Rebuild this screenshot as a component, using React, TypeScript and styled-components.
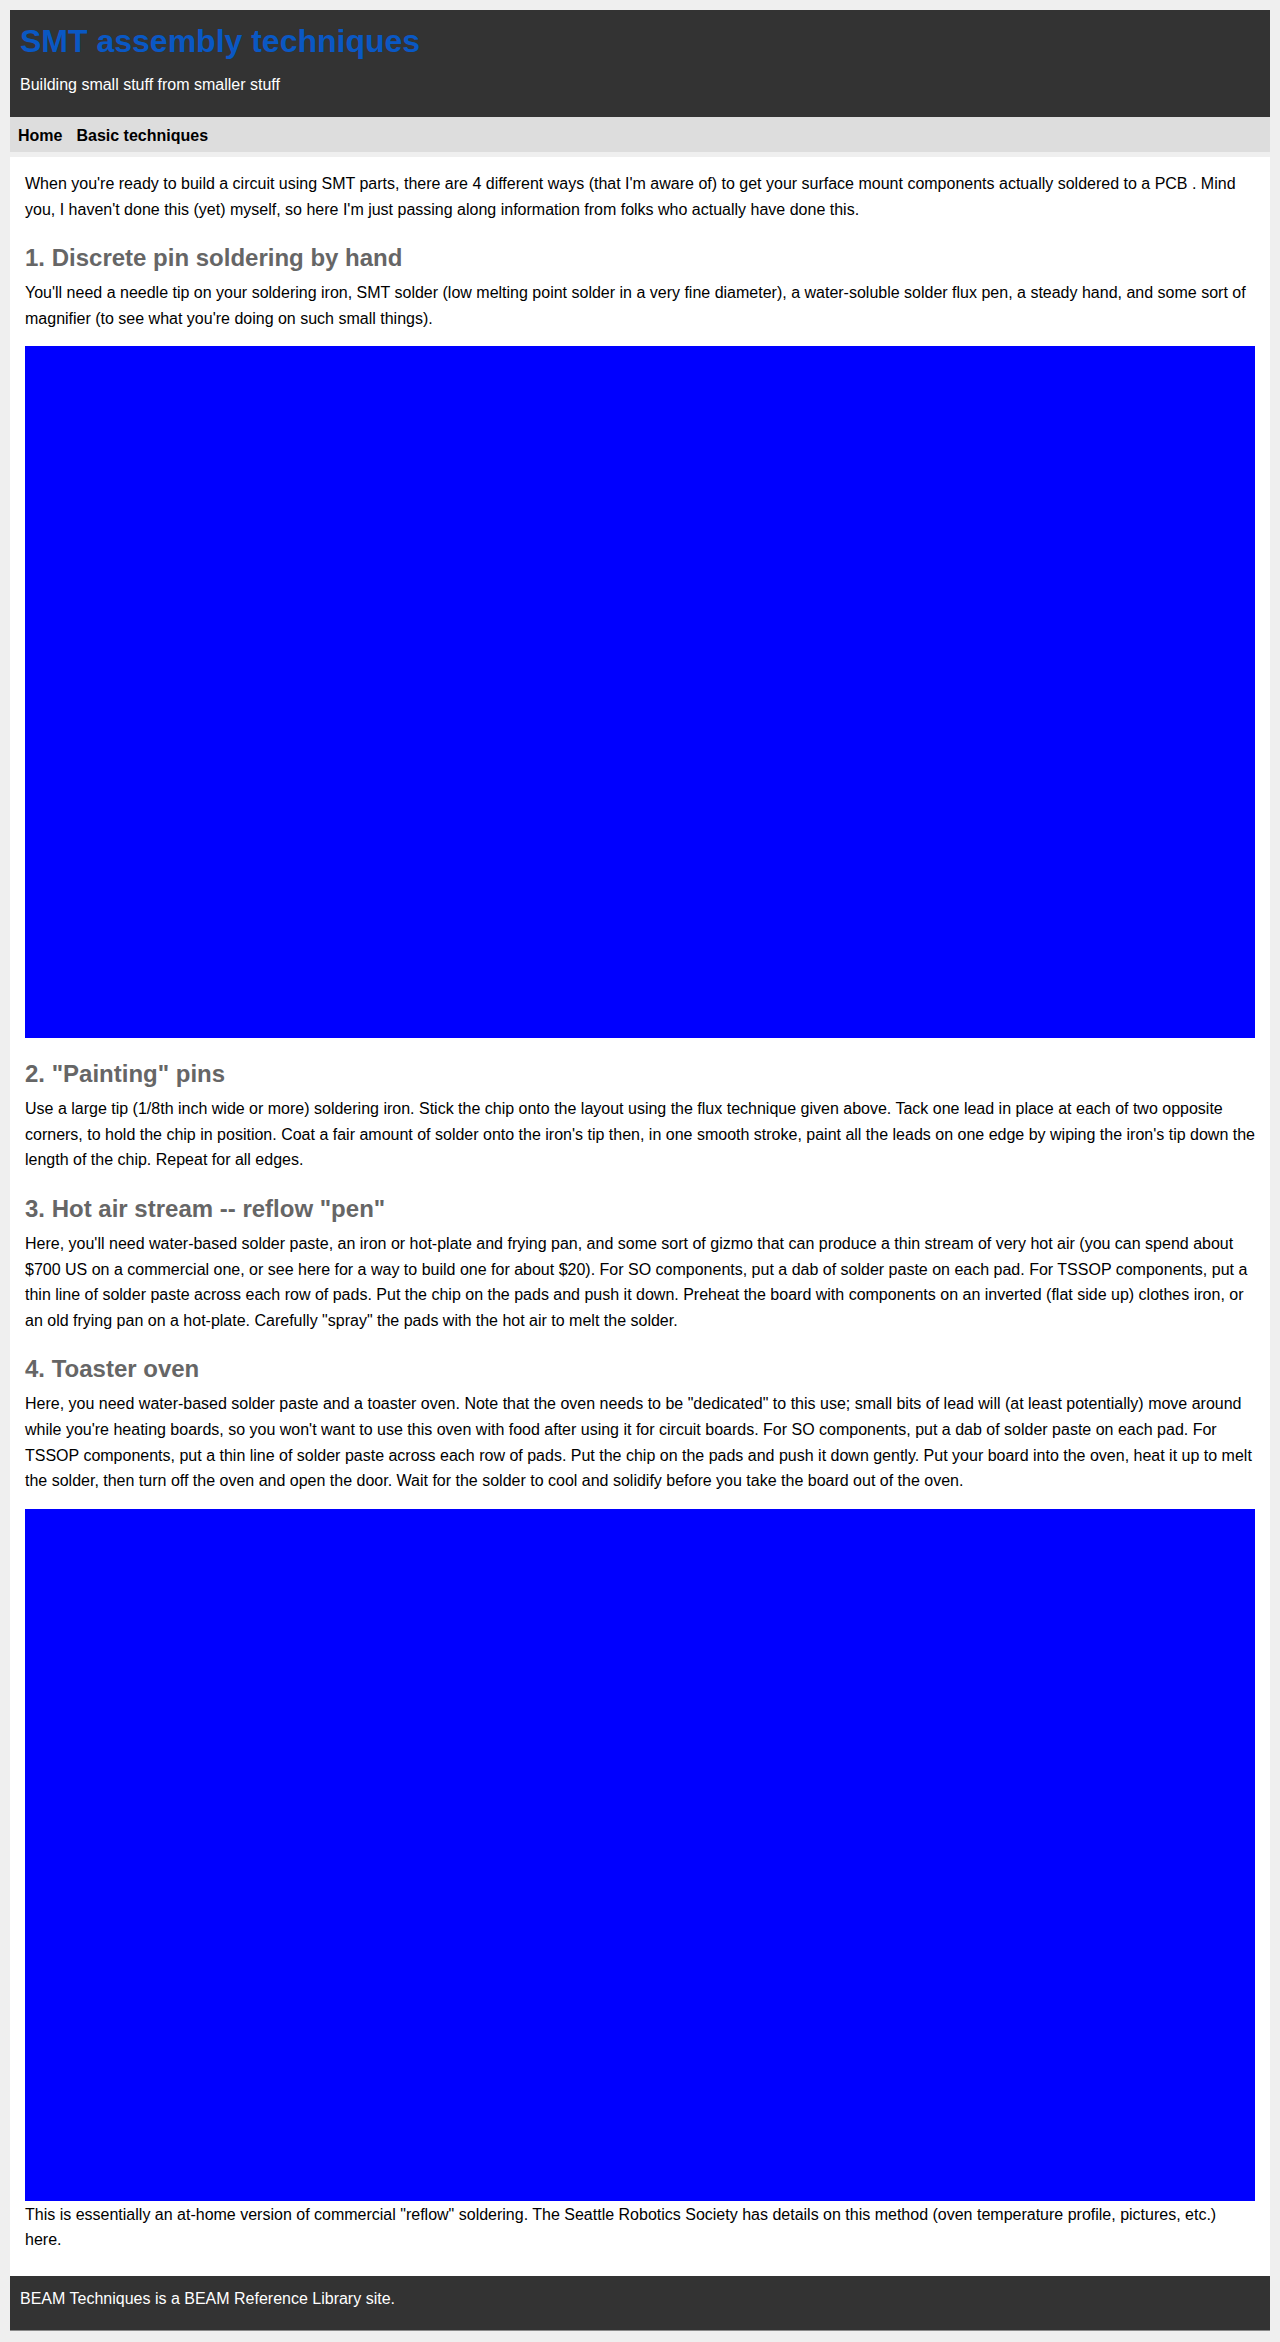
import styled, { createGlobalStyle } from 'styled-components'

const colors = {
  page: '#efefef',
  dark: '#333333',
  nav: '#dddddd',
  title: '#0a58c4',
  heading: '#666666',
  text: '#000000',
  placeholder: '#0000ff'
}

const GlobalStyle = createGlobalStyle`
  html,
  body {
    margin: 0;
    padding: 0;
    background: ${colors.page};
  }

  body {
    font-family: 'Liberation Sans', Arial, Helvetica, sans-serif;
    color: ${colors.text};
  }
`

const StyledPage = styled.div`
  margin: 10px;
  display: flex;
  flex-direction: column;
`

const StyledHeader = styled.header`
  background-color: ${colors.dark};
  padding: 13px 10px 23px;
`

const StyledTitle = styled.h1`
  margin: 0 0 17px;
  font-size: 32px;
  line-height: 36px;
  font-weight: bold;
  color: ${colors.title};
`

const StyledTagline = styled.p`
  margin: 0;
  font-size: 16px;
  line-height: 18px;
  color: #ffffff;
`

const StyledNav = styled.nav`
  display: flex;
  gap: 14px;
  background-color: ${colors.nav};
  padding: 10px 8px 7px;
  margin-bottom: 5px;
`

const StyledNavLink = styled.a`
  font-size: 16px;
  line-height: 18px;
  font-weight: bold;
  color: ${colors.text};
  text-decoration: none;
`

const StyledMain = styled.main`
  background-color: #ffffff;
  padding: 14px 15px 23px;
`

const StyledHeading = styled.h2`
  margin: 21px 0 8px;
  font-size: 24px;
  line-height: 29px;
  font-weight: bold;
  color: ${colors.heading};
`

const StyledParagraph = styled.p<{ $afterFigure?: boolean }>`
  margin: ${({ $afterFigure }) => ($afterFigure ? '1px 0 0' : '0')};
  font-size: 16px;
  line-height: 1.6;
`

const StyledFigure = styled.div`
  width: 100%;
  aspect-ratio: 16 / 9;
  margin-top: 15px;
  background-color: ${colors.placeholder};
`

const StyledFooter = styled.footer`
  background-color: ${colors.dark};
  border-bottom: 1px solid #8a8a8a;
  padding: 14px 10px 22px;
  color: #ffffff;
  font-size: 16px;
  line-height: 18px;
`

export default function App() {
  return (
    <>
      <GlobalStyle />
      <StyledPage>
        <StyledHeader>
          <StyledTitle>SMT assembly techniques</StyledTitle>
          <StyledTagline>Building small stuff from smaller stuff</StyledTagline>
        </StyledHeader>

        <StyledNav>
          <StyledNavLink href="#">Home</StyledNavLink>
          <StyledNavLink href="#">Basic techniques</StyledNavLink>
        </StyledNav>

        <StyledMain>
          <StyledParagraph>
            When you're ready to build a circuit using SMT parts, there are 4
            different ways (that I'm aware of) to get your surface mount
            components actually soldered to a PCB . Mind you, I haven't done
            this (yet) myself, so here I'm just passing along information from
            folks who actually have done this.
          </StyledParagraph>

          <StyledHeading>1. Discrete pin soldering by hand</StyledHeading>
          <StyledParagraph>
            You'll need a needle tip on your soldering iron, SMT solder (low
            melting point solder in a very fine diameter), a water-soluble
            solder flux pen, a steady hand, and some sort of magnifier (to see
            what you're doing on such small things).
          </StyledParagraph>
          <StyledFigure role="img" aria-label="Soldering by hand" />

          <StyledHeading>2. "Painting" pins</StyledHeading>
          <StyledParagraph>
            Use a large tip (1/8th inch wide or more) soldering iron. Stick the
            chip onto the layout using the flux technique given above. Tack one
            lead in place at each of two opposite corners, to hold the chip in
            position. Coat a fair amount of solder onto the iron's tip then, in
            one smooth stroke, paint all the leads on one edge by wiping the
            iron's tip down the length of the chip. Repeat for all edges.
          </StyledParagraph>

          <StyledHeading>3. Hot air stream -- reflow "pen"</StyledHeading>
          <StyledParagraph>
            Here, you'll need water-based solder paste, an iron or hot-plate and
            frying pan, and some sort of gizmo that can produce a thin stream of
            very hot air (you can spend about $700 US on a commercial one, or
            see here for a way to build one for about $20). For SO components,
            put a dab of solder paste on each pad. For TSSOP components, put a
            thin line of solder paste across each row of pads. Put the chip on
            the pads and push it down. Preheat the board with components on an
            inverted (flat side up) clothes iron, or an old frying pan on a
            hot-plate. Carefully "spray" the pads with the hot air to melt the
            solder.
          </StyledParagraph>

          <StyledHeading>4. Toaster oven</StyledHeading>
          <StyledParagraph>
            Here, you need water-based solder paste and a toaster oven. Note
            that the oven needs to be "dedicated" to this use; small bits of
            lead will (at least potentially) move around while you're heating
            boards, so you won't want to use this oven with food after using it
            for circuit boards. For SO components, put a dab of solder paste on
            each pad. For TSSOP components, put a thin line of solder paste
            across each row of pads. Put the chip on the pads and push it down
            gently. Put your board into the oven, heat it up to melt the
            solder, then turn off the oven and open the door. Wait for the
            solder to cool and solidify before you take the board out of the
            oven.
          </StyledParagraph>
          <StyledFigure role="img" aria-label="Toaster oven reflow" />
          <StyledParagraph $afterFigure>
            This is essentially an at-home version of commercial "reflow"
            soldering. The Seattle Robotics Society has details on this method
            (oven temperature profile, pictures, etc.) here.
          </StyledParagraph>
        </StyledMain>

        <StyledFooter>
          BEAM Techniques is a BEAM Reference Library site.
        </StyledFooter>
      </StyledPage>
    </>
  )
}
